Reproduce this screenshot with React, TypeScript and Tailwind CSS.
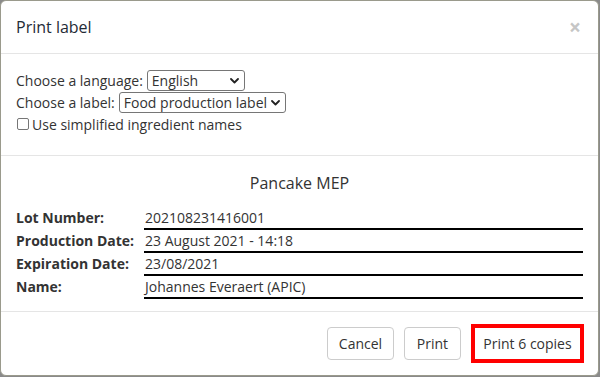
const Chevron = () => (
  <svg width="9" height="6" viewBox="0 0 9 6" className="shrink-0">
    <path d="M1 1l3.5 3.5L8 1" fill="none" stroke="#222" strokeWidth="1.8" strokeLinecap="round" strokeLinejoin="round" />
  </svg>
);

const FakeSelect = ({ value, width }: { value: string; width: string }) => (
  <div className={`flex h-[21px] items-center justify-between rounded-[3px] border border-[#767676] bg-white pl-[4px] pr-[5px] ${width}`}>
    <span className="leading-none">{value}</span>
    <Chevron />
  </div>
);

const rows = [
  { label: 'Lot Number:', value: '202108231416001' },
  { label: 'Production Date:', value: '23 August 2021 - 14:18' },
  { label: 'Expiration Date:', value: '23/08/2021' },
  { label: 'Name:', value: 'Johannes Everaert (APIC)' },
];

export default function App() {
  return (
    <div
      className="h-[377px] w-[600px] overflow-hidden bg-[#8a8a8a] text-[14px] text-[#333]"
      style={{ fontFamily: '"Open Sans", "Noto Sans", sans-serif' }}
    >
      <div className="flex h-[376px] w-[599px] flex-col overflow-hidden rounded-[6px] border border-[#9a9a8c] bg-white">
        <div className="flex h-[53px] shrink-0 items-center justify-between border-b border-[#e5e5e5] pl-[15px] pr-[17px]">
          <h4 className="text-[16px] text-[#1f2b36]">Print label</h4>
          <span className="text-[21px] font-bold leading-none text-[#c6c6c6]">×</span>
        </div>

        <div className="h-[102px] shrink-0 border-b border-[#e5e5e5] px-[15px] pt-[16px]">
          <div className="flex h-[22px] items-start gap-[4px]">
            <span className="leading-[21px]">Choose a language:</span>
            <FakeSelect value="English" width="w-[98px]" />
          </div>
          <div className="flex h-[22px] items-start gap-[4px]">
            <span className="leading-[21px]">Choose a label:</span>
            <FakeSelect value="Food production label" width="w-[167px]" />
          </div>
          <label className="flex h-[20px] items-center gap-[3px] pl-[1px]">
            <span className="h-[12px] w-[12px] rounded-[2px] border border-[#767676] bg-white" />
            <span>Use simplified ingredient names</span>
          </label>
        </div>

        <div className="h-[156px] shrink-0 border-b border-[#e5e5e5] px-[15px] pt-[15px]">
          <div className="mb-[12px] text-center text-[16px] leading-[24px]">Pancake MEP</div>
          <div className="flex flex-col">
            {rows.map((row) => (
              <div key={row.label} className="flex h-[23px]">
                <div className="w-[128px] font-bold leading-[21px]">{row.label}</div>
                <div className="flex-1 border-b-2 border-black pl-[1px] leading-[21px]">{row.value}</div>
              </div>
            ))}
          </div>
        </div>

        <div className="flex flex-1 items-center justify-end gap-[10px] pr-[14px]">
          <button className="h-[33px] w-[67px] rounded-[4px] border border-[#ccc] bg-white">Cancel</button>
          <button className="h-[33px] w-[57px] rounded-[4px] border border-[#ccc] bg-white">Print</button>
          <button className="h-[39px] w-[113px] border-4 border-[#ff0000] bg-white">Print 6 copies</button>
        </div>
      </div>
    </div>
  );
}
